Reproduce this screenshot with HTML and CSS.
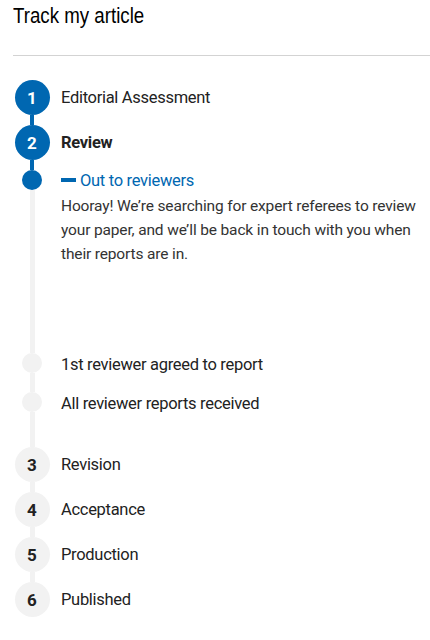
FILE: index.html
```html
<!DOCTYPE html>
<html lang="en">
<head>
<meta charset="utf-8">
<title>Track my article</title>
<link rel="stylesheet" href="styles.css">
</head>
<body>
<h1 class="title"><span class="title-text">Track my article</span></h1>
<div class="divider"></div>
<div class="timeline">
  <div class="step">
    <div class="marker"><span class="badge badge-active">1</span></div>
    <span class="label">Editorial Assessment</span>
  </div>
  <div class="link link-blue"></div>
  <div class="step">
    <div class="marker"><span class="badge badge-active">2</span></div>
    <span class="label label-bold">Review</span>
  </div>
  <div class="link link-blue"></div>
  <div class="sub sub-first">
    <div class="sub-marker"><span class="dot dot-blue"></span><span class="bar"></span></div>
    <div class="sub-content">
      <div class="sub-title"><span class="dash"></span>Out to reviewers</div>
      <p class="sub-text">Hooray! We’re searching for expert referees to review your paper, and we’ll be back in touch with you when their reports are in.</p>
    </div>
  </div>
  <div class="sub sub-second">
    <div class="sub-marker"><span class="dot dot-grey"></span><span class="bar"></span></div>
    <div class="sub-content"><div class="sub-label">1st reviewer agreed to report</div></div>
  </div>
  <div class="sub sub-third">
    <div class="sub-marker"><span class="dot dot-grey"></span><span class="bar"></span></div>
    <div class="sub-content"><div class="sub-label">All reviewer reports received</div></div>
  </div>
  <div class="step">
    <div class="marker"><span class="badge badge-todo">3</span></div>
    <span class="label">Revision</span>
  </div>
  <div class="link link-grey"></div>
  <div class="step">
    <div class="marker"><span class="badge badge-todo">4</span></div>
    <span class="label">Acceptance</span>
  </div>
  <div class="link link-grey"></div>
  <div class="step">
    <div class="marker"><span class="badge badge-todo">5</span></div>
    <span class="label">Production</span>
  </div>
  <div class="link link-grey"></div>
  <div class="step">
    <div class="marker"><span class="badge badge-todo">6</span></div>
    <span class="label">Published</span>
  </div>
</div>
</body>
</html>
```

FILE: styles.css
```css
html, body {
  margin: 0;
  padding: 0;
  background: #fff;
}
body {
  font-family: Roboto, "Liberation Sans", Arial, sans-serif;
  color: #222;
}
.title {
  margin: 0;
  padding: 3px 0 0 13px;
  font-family: "Liberation Sans", Arial, sans-serif;
  font-weight: normal;
  font-size: 22px;
  line-height: 26px;
  color: #000;
}
.title-text {
  display: inline-block;
  transform: scaleX(0.85);
  transform-origin: left center;
}
.divider {
  margin: 26px 0 0 13px;
  height: 1px;
  background: #d3d3d3;
}
.timeline {
  margin-top: 24px;
  padding-left: 14px;
}
.step {
  display: flex;
  align-items: center;
  height: 35px;
}
.marker {
  width: 36px;
  flex: none;
  display: flex;
  justify-content: center;
}
.badge {
  width: 35px;
  height: 35px;
  border-radius: 50%;
  display: flex;
  align-items: center;
  justify-content: center;
  font-weight: bold;
  font-size: 17px;
}
.badge-active {
  background: #0067b1;
  color: #fff;
}
.badge-todo {
  background: #f2f2f2;
  color: #222;
}
.label {
  margin-left: 11px;
  font-size: 16.5px;
  letter-spacing: -0.3px;
  line-height: 20px;
  color: #222;
}
.label-bold {
  font-weight: bold;
}
.link {
  height: 10px;
  margin-left: 16px;
}
.link-blue {
  width: 4px;
  background: #0067b1;
}
.link-grey {
  width: 5px;
  background: #f2f2f2;
}
.sub {
  display: flex;
}
.sub-marker {
  width: 36px;
  flex: none;
  display: flex;
  flex-direction: column;
  align-items: center;
}
.dot {
  width: 20px;
  height: 20px;
  border-radius: 50%;
  flex: none;
}
.dot-blue {
  background: #0067b1;
}
.dot-grey {
  background: #f2f2f2;
}
.bar {
  flex: 1;
  width: 5px;
  align-self: flex-start;
  margin-left: 16px;
  background: #f2f2f2;
}
.sub-content {
  margin-left: 11px;
  min-width: 0;
}
.sub-title {
  display: flex;
  align-items: center;
  height: 20px;
  margin-bottom: 4px;
  font-size: 16.5px;
  letter-spacing: -0.3px;
  color: #0067b1;
}
.dash {
  width: 15px;
  height: 4px;
  margin-right: 4px;
  background: #0067b1;
}
.sub-text {
  margin: 0;
  padding-bottom: 87px;
  font-size: 15.5px;
  letter-spacing: -0.15px;
  line-height: 24px;
  color: #333;
}
.sub-label {
  height: 20px;
  padding-top: 2px;
  font-size: 16.5px;
  letter-spacing: -0.3px;
  line-height: 20px;
  color: #222;
}
.sub-second .sub-content {
  padding-bottom: 17px;
}
.sub-third .sub-content {
  padding-bottom: 33px;
}
```
